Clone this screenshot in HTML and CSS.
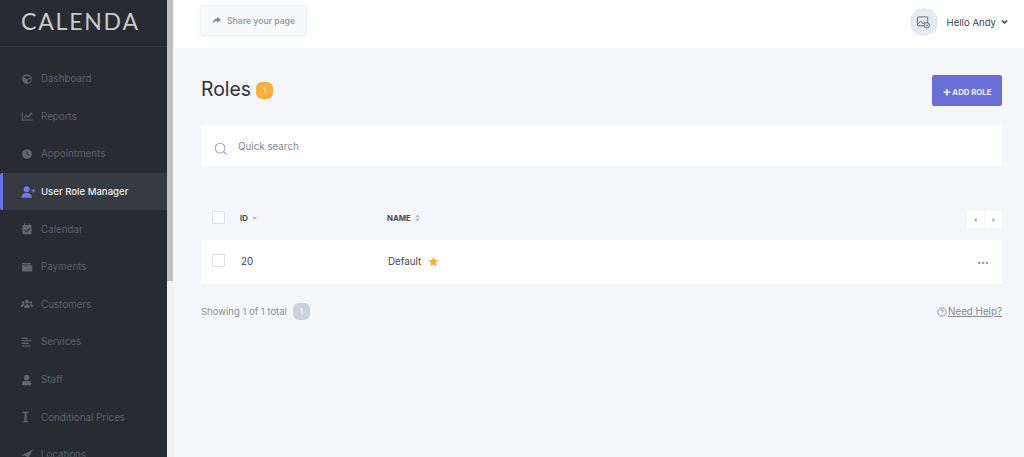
FILE: index.html
```html
<!DOCTYPE html>
<html lang="en">
<head>
  <meta charset="UTF-8" />
  <meta name="viewport" content="width=device-width, initial-scale=1" />
  <title>Roles</title>
  <link rel="stylesheet" href="styles.css">
</head>
<body>
  <aside class="sidebar">
    <div class="logo">CALENDA</div>
    <nav class="nav">
      <a class="nav-item"><svg viewBox="0 0 16 16"><path fill-rule="evenodd" d="M8 1.500a6.500 6.500 0 1 0 0 13 6.500 6.500 0 0 0 0-13zM2.800 5.800 8 3.500l5.200 2.300L8 8.200zM8.700 9.300l4.800-2.200v1.500c0 2-2 4-4.800 4.300z"/></svg>Dashboard</a>
      <a class="nav-item"><svg viewBox="0 0 16 16"><path d="M1 2.500h1.300v10h13.200V14H1zM3.500 10l3.500-4 2.500 2 3.200-3.500-1-1H15v3.200l-1-1-4.300 4.600-2.500-2L4.500 11z"/></svg>Reports</a>
      <a class="nav-item"><svg viewBox="0 0 16 16"><path fill-rule="evenodd" d="M8 1.500a6.500 6.500 0 1 0 0 13 6.500 6.500 0 0 0 0-13zM7.200 4.500h1.500v3.200l2.300 1.500-.8 1.200-3-2z"/></svg>Appointments</a>
      <a class="nav-item active"><svg viewBox="0 0 16 16"><circle cx="6.500" cy="4.800" r="3.400"/><path d="M.5 14.500c0-3.800 2.400-5.500 6-5.500s6 1.700 6 5.500zM12 6h1.500V4.500h1.200V6H16v1.200h-1.300v1.500h-1.200V7.200H12z"/></svg>User Role Manager</a>
      <a class="nav-item"><svg viewBox="0 0 16 16"><path fill-rule="evenodd" d="M4 .8h1.700V2.500h4.600V.8H12v1.700h2V15H2V2.500h2zM5.200 8.500l-1 1 3 3 4.800-5-1-1-3.800 4z"/></svg>Calendar</a>
      <a class="nav-item"><svg viewBox="0 0 16 16"><path d="M2.500 2.500h11v2H1.500V3.500a1 1 0 0 1 1-1zM1.500 5.500h13.500V13a1 1 0 0 1-1 1H2.500a1 1 0 0 1-1-1z"/></svg>Payments</a>
      <a class="nav-item"><svg viewBox="0 0 16 16"><circle cx="8" cy="5" r="2.600"/><circle cx="2.900" cy="6" r="1.800"/><circle cx="13.100" cy="6" r="1.800"/><path d="M4.200 13c0-3 1.600-4.800 3.800-4.800s3.800 1.800 3.800 4.800zM0 11.500c0-2 1-3.500 3-3.500l1.300.6c-.9.800-1.300 1.700-1.400 2.900zM16 11.500c0-2-1-3.500-3-3.500l-1.300.6c.9.800 1.300 1.700 1.400 2.900z"/></svg>Customers</a>
      <a class="nav-item"><svg viewBox="0 0 16 16"><path d="M1 2h8v1.500H1zM1 5.500h13v1.500H1zM1 9h9v1.500H1zM1 12.500h12V14H1z"/></svg>Services</a>
      <a class="nav-item"><svg viewBox="0 0 16 16"><circle cx="7.500" cy="4.500" r="3.500"/><path d="M1.500 15v-2.500c0-2.200 1.700-3.500 3.300-3.500h5.400c1.600 0 3.300 1.300 3.300 3.500V15z"/></svg>Staff</a>
      <a class="nav-item"><svg viewBox="0 0 16 16"><path d="M2.500 1h7v1.500H7.200v4.700h1.300v1.500H7.200v4.800h2.300V15h-7v-1.500h2.300V8.700H3.500V7.200h1.300V2.500H2.500z"/></svg>Conditional Prices</a>
      <a class="nav-item"><svg viewBox="0 0 16 16"><path d="M16 .5 .5 8.500 7 9l1 6.500z"/></svg>Locations</a>
    </nav>
  </aside>
  <div class="scrollbar"><div class="scroll-thumb"></div></div>

  <div class="content">
    <header class="topbar">
      <button class="share"><svg viewBox="0 0 12 12"><path d="M7 1 12 5 7 9V6.500C4.500 6.500 2.500 7.200 1 10 1 6 3.500 3.500 7 3.300z"/></svg>Share your page</button>
      <div class="user">
        <span class="avatar"><svg viewBox="0 0 16 16"><rect x="1.500" y="2" width="11" height="9.500" rx="1"/><path d="m2 10 3-3.500 2.500 3L9 8l2 2"/><circle cx="11.500" cy="11" r="2.800" class="avatar-dot"/><path d="M10.300 11h2.400"/></svg></span>
        <span class="user-name">Hello Andy</span>
        <svg class="chevron" viewBox="0 0 8 6"><path d="M1 1.200 4 4.200l3-3"/></svg>
      </div>
    </header>

    <main class="main">
      <div class="title-row">
        <h1>Roles</h1>
        <span class="count">1</span>
        <button class="add-role"><span class="plus">+</span>ADD ROLE</button>
      </div>

      <div class="search">
        <svg viewBox="0 0 16 16"><circle cx="7" cy="7" r="5.500"/><path d="m11 11 3.500 3.500"/></svg>
        <span>Quick search</span>
      </div>

      <div class="table-head">
        <span class="check"></span>
        <span class="col-id">ID <svg class="sort" viewBox="0 0 8 8"><path d="M1.500 3h5L4 6z"/></svg></span>
        <span class="col-name">NAME <svg class="sort" viewBox="0 0 8 10"><path d="M1.500 4 4 1l2.500 3zM1.500 6h5L4 9z"/></svg></span>
        <span class="pager">
          <span class="page-btn"><svg viewBox="0 0 6 8"><path d="M4.500 1v6L1 4z"/></svg></span>
          <span class="page-btn"><svg viewBox="0 0 6 8"><path d="M1.500 1v6L5 4z"/></svg></span>
        </span>
      </div>

      <div class="table-row">
        <span class="check"></span>
        <span class="cell-id">20</span>
        <span class="cell-name">Default
          <svg class="star" viewBox="0 0 24 24"><path d="m12 1.500 3.300 7 7.700 1-5.600 5.300 1.400 7.700-6.800-3.700-6.800 3.700 1.400-7.700L1 9.500l7.700-1z"/></svg>
        </span>
        <span class="dots">•••</span>
      </div>

      <div class="table-foot">
        <span class="showing">Showing 1 of 1 total</span>
        <span class="total">1</span>
        <a class="help"><svg viewBox="0 0 12 12"><circle cx="6" cy="6" r="5"/><path d="M4.500 4.700C4.500 3.800 5.200 3.300 6 3.300s1.500.5 1.500 1.300C7.500 5.800 6 5.800 6 7.200M6 8.200v.8"/></svg><span>Need Help?</span></a>
      </div>
    </main>
  </div>
</body>
</html>
```

FILE: styles.css
```css
* {
  box-sizing: border-box;
}
html, body {
  height: 100%;
}
body {
  margin: 0;
  display: flex;
  overflow: hidden;
  background-color: #f4f6fa;
  color: #3a3d42;
  font-family: 'Inter', 'Noto Sans', sans-serif;
}
button {
  font-family: inherit;
  cursor: pointer;
}

/* sidebar */
.sidebar {
  width: 167px;
  height: 457px;
  flex: none;
  overflow: hidden;
  background-color: #282c31;
}
.logo {
  height: 47px;
  padding: 9px 0 0 21px;
  border-bottom: 1px solid #33373c;
  color: #c9cac9;
  font-family: 'Lato', sans-serif;
  font-size: 23px;
  font-weight: 400;
  line-height: 24px;
  letter-spacing: 1.8px;
}
.nav {
  padding-top: 13px;
}
.nav-item {
  height: 37.6px;
  padding-left: 21px;
  display: flex;
  align-items: center;
  gap: 8px;
  color: #5b5f65;
  font-size: 9.8px;
}
.nav-item svg {
  width: 12px;
  height: 12px;
  flex: none;
  fill: #62666c;
}
.nav-item.active {
  background-color: #363a41;
  border-left: 3px solid #6c70e6;
  border-radius: 2px 0 0 2px;
  padding-left: 18px;
  color: #eceded;
  font-size: 9.6px;
  font-weight: 500;
}
.nav-item.active svg {
  width: 14px;
  height: 14px;
  margin-right: -2px;
  fill: #7478ea;
}
.scrollbar {
  width: 7px;
  height: 457px;
  flex: none;
  background-color: #f1f1f1;
}
.scroll-thumb {
  width: 6px;
  height: 281px;
  background-color: #c1c1c1;
}

/* top bar */
.content {
  flex: 1;
  min-width: 0;
}
.topbar {
  height: 48px;
  padding: 5px 16px 0 26px;
  display: flex;
  justify-content: space-between;
  align-items: flex-start;
  background-color: #fff;
}
.share {
  width: 107px;
  height: 31px;
  padding: 0 0 0 11px;
  display: flex;
  align-items: center;
  gap: 6px;
  background-color: #f8f9fb;
  border: 1px solid #f1f2f5;
  border-radius: 2px;
  box-shadow: 0 2px 6px rgba(60, 70, 100, 0.05);
  color: #9a9da3;
  font-size: 8.6px;
  font-weight: 600;
}
.share svg {
  width: 9px;
  height: 9px;
  fill: #85888e;
}
.user {
  margin-top: 3px;
  display: flex;
  align-items: center;
}
.avatar {
  width: 28px;
  height: 28px;
  margin-right: 9px;
  display: flex;
  align-items: center;
  justify-content: center;
  background-color: #e6eaf1;
  border-radius: 50%;
}
.avatar svg {
  width: 15px;
  height: 15px;
  fill: none;
  stroke: #5f636b;
  stroke-width: 1;
}
.avatar .avatar-dot {
  fill: #e6eaf1;
}
.user-name {
  margin-right: 5px;
  color: #3f4247;
  font-size: 9.6px;
}
.chevron {
  width: 7px;
  height: 6px;
  fill: none;
  stroke: #33363a;
  stroke-width: 1.6;
}

/* page */
.main {
  padding: 0 22px 0 27px;
}
.title-row {
  height: 58px;
  padding-top: 28px;
  display: flex;
  align-items: flex-start;
}
h1 {
  margin: 0 5px 0 0;
  color: #2f3237;
  font-size: 19.4px;
  font-weight: 400;
  line-height: 26px;
}
.count {
  width: 17px;
  height: 17px;
  margin-top: 6px;
  background-color: #fbb03b;
  border-radius: 6px;
  color: #fde4b8;
  font-size: 9px;
  line-height: 17px;
  text-align: center;
}
.add-role {
  width: 70px;
  height: 31px;
  margin-top: -1px;
  margin-left: auto;
  padding: 0;
  background-color: #6a6fd8;
  border: 0;
  border-radius: 2px;
  color: #eef;
  font-size: 7.8px;
  font-weight: 700;
}
.plus {
  margin-right: 1px;
  font-size: 13px;
  vertical-align: -1.5px;
}
.search {
  height: 40px;
  margin-top: 20px;
  padding-left: 13px;
  display: flex;
  align-items: center;
  gap: 10px;
  background-color: #fff;
  border-radius: 2px;
  color: #85888e;
  font-size: 9.8px;
}
.search svg {
  width: 14px;
  height: 14px;
  margin-top: 6px;
  fill: none;
  stroke: #a2a5aa;
  stroke-width: 1.2;
}

/* table */
.table-head, .table-row {
  display: grid;
  grid-template-columns: 28px 147px 1fr auto;
  align-items: center;
}
.table-head {
  height: 34px;
  margin-top: 35px;
  margin-bottom: 5px;
  padding-left: 11px;
  color: #4a4d53;
  font-size: 7.8px;
  font-weight: 700;
}
.check {
  width: 13px;
  height: 13px;
  background-color: #fff;
  border: 1px solid #dcdfe5;
  border-radius: 1px;
}
.table-head .check {
  margin-bottom: 1px;
}
.sort {
  width: 7px;
  height: 8px;
  margin-left: 1px;
  fill: #a9acb2;
  vertical-align: -1px;
}
.pager {
  display: flex;
  gap: 1px;
  margin-top: 3px;
}
.page-btn {
  width: 17px;
  height: 17px;
  display: flex;
  align-items: center;
  justify-content: center;
  background-color: #fff;
  border-radius: 2px;
}
.page-btn svg {
  width: 5px;
  height: 6px;
  fill: #a3a6ab;
}
.table-row {
  height: 44px;
  padding-left: 11px;
  background-color: #fff;
  color: #44474c;
  font-size: 9.8px;
}
.table-row .check {
  margin-bottom: 3px;
}
.cell-id {
  padding-left: 1px;
  padding-bottom: 1px;
}
.cell-name {
  padding-left: 1px;
  padding-bottom: 1px;
  display: flex;
  align-items: center;
  gap: 7px;
}
.star {
  width: 11px;
  height: 11px;
  fill: #fbb03b;
}
.dots {
  padding-right: 13px;
  color: #8e9196;
  font-size: 7px;
}
.table-foot {
  margin-top: 19px;
  display: flex;
  align-items: center;
  gap: 6px;
  font-size: 9.5px;
}
.showing {
  color: #8b8e93;
}
.total {
  width: 17px;
  height: 17px;
  background-color: #cdd1da;
  border-radius: 6px;
  color: #f3f4f7;
  font-size: 9px;
  line-height: 17px;
  text-align: center;
}
.help {
  margin-left: auto;
  display: flex;
  align-items: center;
  gap: 1px;
  color: #85888e;
  font-size: 9.8px;
  text-decoration: underline;
}
.help svg {
  width: 10px;
  height: 10px;
  fill: none;
  stroke: #85888e;
  stroke-width: 1;
}
```
